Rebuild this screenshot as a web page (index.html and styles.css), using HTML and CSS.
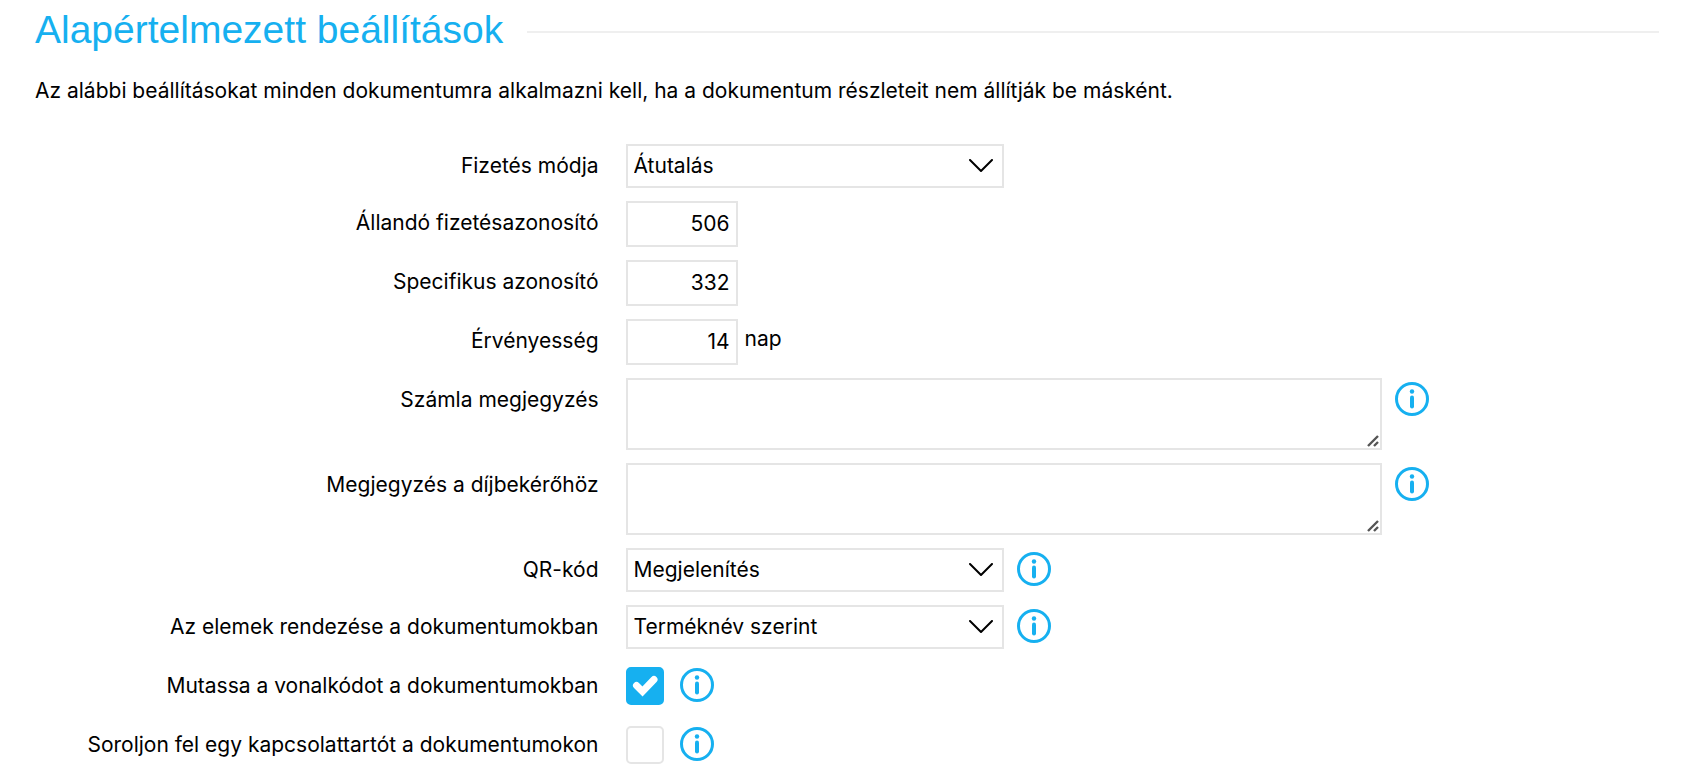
FILE: index.html
```html
<!DOCTYPE html>
<html lang="hu">
<head>
    <meta charset="UTF-8">
    <meta name="viewport" content="width=device-width, initial-scale=1.0">
    <link rel="stylesheet" href="styles.css">
    <title>Alapértelmezett beállítások</title>
</head>
<body>
    <svg class="sprite" aria-hidden="true">
        <symbol id="info" viewBox="0 0 34 34">
            <circle cx="17" cy="17" r="15.5" fill="none" stroke="currentColor" stroke-width="3"/>
            <circle cx="17" cy="9.5" r="2.2" fill="currentColor"/>
            <path d="M17 15.5v9" fill="none" stroke="currentColor" stroke-width="4" stroke-linecap="round"/>
        </symbol>
        <symbol id="grip" viewBox="0 0 12 12">
            <path d="M1 11L11 1M7 11l4-4" fill="none" stroke="currentColor" stroke-width="2.4"/>
        </symbol>
        <symbol id="arrow" viewBox="0 0 24 14">
            <path d="M1 1l11 11L23 1" fill="none" stroke="currentColor" stroke-width="2" stroke-linecap="round" stroke-linejoin="round"/>
        </symbol>
    </svg>

    <div class="container">
        <h1>Alapértelmezett beállítások</h1>
        <p>Az alábbi beállításokat minden dokumentumra alkalmazni kell, ha a dokumentum részleteit nem állítják be másként.</p>

        <form id="settingsForm">
            <div class="form-row">
                <label for="payment">Fizetés módja</label>
                <div class="field">
                    <div class="select-box">
                        <select id="payment">
                            <option>Átutalás</option>
                        </select>
                        <svg class="arrow"><use href="#arrow"/></svg>
                    </div>
                </div>
            </div>
            <div class="form-row">
                <label for="constant">Állandó fizetésazonosító</label>
                <div class="field">
                    <input type="text" id="constant" value="506">
                </div>
            </div>
            <div class="form-row">
                <label for="specific">Specifikus azonosító</label>
                <div class="field">
                    <input type="text" id="specific" value="332">
                </div>
            </div>
            <div class="form-row">
                <label for="due">Érvényesség</label>
                <div class="field">
                    <input type="text" id="due" value="14">
                    <span class="unit">nap</span>
                </div>
            </div>
            <div class="form-row">
                <label for="invoiceNote">Számla megjegyzés</label>
                <div class="field">
                    <div class="note-box">
                        <textarea id="invoiceNote"></textarea>
                        <svg class="grip"><use href="#grip"/></svg>
                    </div>
                    <button type="button" class="info" aria-label="Információ"><svg><use href="#info"/></svg></button>
                </div>
            </div>
            <div class="form-row">
                <label for="proformaNote">Megjegyzés a díjbekérőhöz</label>
                <div class="field">
                    <div class="note-box">
                        <textarea id="proformaNote"></textarea>
                        <svg class="grip"><use href="#grip"/></svg>
                    </div>
                    <button type="button" class="info" aria-label="Információ"><svg><use href="#info"/></svg></button>
                </div>
            </div>
            <div class="form-row">
                <label for="qr">QR-kód</label>
                <div class="field">
                    <div class="select-box">
                        <select id="qr">
                            <option>Megjelenítés</option>
                        </select>
                        <svg class="arrow"><use href="#arrow"/></svg>
                    </div>
                    <button type="button" class="info" aria-label="Információ"><svg><use href="#info"/></svg></button>
                </div>
            </div>
            <div class="form-row">
                <label for="sorting">Az elemek rendezése a dokumentumokban</label>
                <div class="field">
                    <div class="select-box">
                        <select id="sorting">
                            <option>Terméknév szerint</option>
                        </select>
                        <svg class="arrow"><use href="#arrow"/></svg>
                    </div>
                    <button type="button" class="info" aria-label="Információ"><svg><use href="#info"/></svg></button>
                </div>
            </div>
            <div class="form-row check-row">
                <label for="barcode">Mutassa a vonalkódot a dokumentumokban</label>
                <div class="field">
                    <div class="check-box">
                        <input type="checkbox" id="barcode" checked>
                        <svg class="tick" viewBox="0 0 38 38"><path d="M10.5 18.5l6 6L28 12.5" fill="none" stroke="currentColor" stroke-width="7" stroke-linecap="round"/></svg>
                    </div>
                    <button type="button" class="info" aria-label="Információ"><svg><use href="#info"/></svg></button>
                </div>
            </div>
            <div class="form-row check-row">
                <label for="contact">Soroljon fel egy kapcsolattartót a dokumentumokon</label>
                <div class="field">
                    <div class="check-box">
                        <input type="checkbox" id="contact">
                    </div>
                    <button type="button" class="info" aria-label="Információ"><svg><use href="#info"/></svg></button>
                </div>
            </div>
        </form>
    </div>
</body>
</html>
```
FILE: styles.css
```css
* {
    box-sizing: border-box;
}

body {
    font-family: Inter, sans-serif;
    font-size: 21px;
    line-height: 28px;
    color: #000;
    background-color: #fff;
    margin: 0;
}

.sprite {
    display: none;
}

.container {
    padding: 4px 35px 0;
}

h1 {
    display: flex;
    align-items: center;
    gap: 24px;
    margin: 0;
    font-family: "Liberation Sans", Arial, sans-serif;
    font-size: 39px;
    font-weight: 400;
    line-height: 52px;
    color: #16b0f0;
}

h1::after {
    content: "";
    flex: 1;
    height: 2px;
    margin-top: 4px;
    background-color: #efefef;
}

p {
    margin: 21px 0 39px;
}

form {
    display: flex;
    flex-direction: column;
    gap: 13px;
}

.form-row {
    display: grid;
    grid-template-columns: 4fr 7fr;
}

.form-row label {
    padding-right: 27px;
    line-height: 44px;
    text-align: right;
}

.field {
    display: flex;
    align-items: flex-start;
}

input, select, textarea {
    font: inherit;
    color: inherit;
    background-color: #fff;
    border: 2px solid #e5e5e5;
    border-radius: 0;
    margin: 0;
}

input[type="text"] {
    width: 112px;
    height: 46px;
    padding: 0 6px 2px;
    text-align: right;
}

.unit {
    padding-left: 7px;
    line-height: 40px;
}

.select-box {
    position: relative;
    width: 378px;
}

select {
    display: block;
    appearance: none;
    width: 100%;
    height: 44px;
    padding: 0 40px 0 6px;
}

.arrow {
    position: absolute;
    top: 15px;
    right: 11px;
    width: 24px;
    height: 14px;
    pointer-events: none;
}

.note-box {
    position: relative;
    flex: 0 1 756px;
}

textarea {
    display: block;
    width: 100%;
    height: 72px;
    padding: 7px;
    resize: none;
}

.grip {
    position: absolute;
    right: 3px;
    bottom: 3px;
    width: 12px;
    height: 12px;
    color: #555;
    pointer-events: none;
}

.info {
    width: 34px;
    height: 34px;
    margin: 4px 0 0 13px;
    padding: 0;
    border: none;
    background: none;
    color: #16b0f0;
    cursor: pointer;
}

.info svg {
    display: block;
    width: 34px;
    height: 34px;
}

.check-row {
    height: 46px;
}

.check-row label {
    line-height: 48px;
}

.check-box {
    position: relative;
    margin-top: 5px;
}

input[type="checkbox"] {
    display: block;
    appearance: none;
    width: 38px;
    height: 38px;
    border-radius: 5px;
}

input[type="checkbox"]:checked {
    background-color: #16b0f0;
    border-color: #16b0f0;
}

.tick {
    position: absolute;
    top: 0;
    left: 0;
    width: 38px;
    height: 38px;
    color: #fff;
    pointer-events: none;
}

.check-row .info {
    margin: 6px 0 0 16px;
}
```
